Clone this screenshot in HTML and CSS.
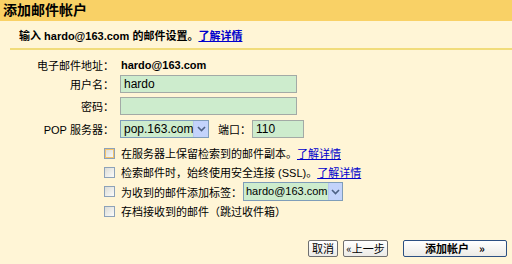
FILE: index.html
```html
<!DOCTYPE html>
<html lang="zh-CN">
<head>
  <meta charset="UTF-8">
  <title>添加邮件帐户</title>
  <link rel="stylesheet" href="styles.css">
</head>
<body>
  <div class="header">添加邮件帐户</div>

  <div class="intro">
    输入 <span class="latin">hardo@163.com</span> 的邮件设置。<a href="#">了解详情</a>
  </div>

  <div class="fields">
    <div class="row row-email">
      <span class="label">电子邮件地址：</span>
      <span class="value latin">hardo@163.com</span>
    </div>
    <div class="row row-input">
      <span class="label">用户名：</span>
      <span class="input wide">hardo</span>
    </div>
    <div class="row row-input">
      <span class="label">密码：</span>
      <span class="input wide"></span>
    </div>
    <div class="row row-pop">
      <span class="label"><span class="latin">POP</span> 服务器：</span>
      <span class="select pop">
        <span class="select-text">pop.163.com</span>
        <span class="arrow"><svg width="9" height="6" viewBox="0 0 9 6"><path d="M1 1 L4.5 4.5 L8 1" fill="none" stroke="#4d6185" stroke-width="1.6"/></svg></span>
      </span>
      <span class="port-label">端口：</span>
      <span class="input port">110</span>
    </div>
  </div>

  <div class="options">
    <div class="opt">
      <span class="check hover"></span>
      <span>在服务器上保留检索到的邮件副本。<a href="#">了解详情</a></span>
    </div>
    <div class="opt">
      <span class="check"></span>
      <span>检索邮件时，始终使用安全连接 <span class="latin">(SSL)</span>。<a href="#">了解详情</a></span>
    </div>
    <div class="opt opt-select">
      <span class="check"></span>
      <span class="opt-text">为收到的邮件添加标签：</span>
      <span class="select label-select">
        <span class="select-text">hardo@163.com</span>
        <span class="arrow"><svg width="9" height="6" viewBox="0 0 9 6"><path d="M1 1 L4.5 4.5 L8 1" fill="none" stroke="#4d6185" stroke-width="1.6"/></svg></span>
      </span>
    </div>
    <div class="opt">
      <span class="check"></span>
      <span>存档接收到的邮件（跳过收件箱）</span>
    </div>
  </div>

  <div class="buttons">
    <button class="btn cancel">取消</button>
    <button class="btn back">«上一步</button>
    <button class="btn primary">添加帐户 &nbsp; &nbsp;»</button>
  </div>
</body>
</html>
```

FILE: styles.css
```css
body {
  margin: 0;
  width: 512px;
  height: 264px;
  background: #fff5d6;
  font-family: "Liberation Sans", "Noto Sans CJK SC", sans-serif;
  font-size: 11px;
  color: #000;
  overflow: hidden;
}
a {
  color: #0000cc;
  text-decoration: underline;
}
.latin {
  font-family: "Liberation Sans", sans-serif;
}
.header {
  height: 21px;
  line-height: 21px;
  padding-left: 3px;
  background: #f9d166;
  font-size: 14px;
  font-weight: bold;
}
.intro {
  margin-left: 10px;
  padding: 6px 0 0 9px;
  height: 21px;
  font-weight: bold;
  border-bottom: 2px solid #f1dc7a;
}
.fields {
  display: flex;
  flex-direction: column;
  margin-top: 7px;
}
.row {
  display: grid;
  grid-template-columns: 120px auto;
  align-items: center;
}
.row-email {
  height: 15px;
}
.row-input {
  height: 18px;
  margin-top: 3px;
}
.row-input + .row-input {
  margin-top: 4px;
}
.row-pop {
  height: 18px;
  margin-top: 5px;
  grid-template-columns: 120px 89px 43px 52px;
}
.label {
  text-align: right;
  padding-right: 6px;
  white-space: nowrap;
}
.value {
  font-weight: bold;
  padding-left: 1px;
}
.input {
  box-sizing: border-box;
  height: 18px;
  line-height: 16px;
  padding-left: 3px;
  background: #cdeccd;
  border: 1px solid #a3aaa6;
  font-family: "Liberation Sans", sans-serif;
  font-size: 12px;
}
.wide {
  width: 177px;
}
.port {
  width: 52px;
}
.port-label {
  padding-left: 9px;
  white-space: nowrap;
}
.select {
  box-sizing: border-box;
  display: flex;
  align-items: stretch;
  height: 18px;
  background: #cdeccd;
  border: 1px solid #7f9db9;
  font-family: "Liberation Sans", sans-serif;
  font-size: 12px;
}
.select-text {
  flex: 1;
  line-height: 16px;
  padding-left: 3px;
  white-space: nowrap;
}
.arrow {
  width: 14px;
  flex: none;
  display: flex;
  align-items: center;
  justify-content: center;
  background: #c3d3fb;
  border-left: 1px solid #b7c8ef;
}
.options {
  display: flex;
  flex-direction: column;
  gap: 1px;
  margin-top: 6px;
  padding-left: 104px;
}
.opt {
  display: flex;
  align-items: center;
  height: 18px;
  white-space: nowrap;
}
.opt-select {
  height: 19px;
}
.opt-text {
  width: 122px;
  flex: none;
}
.check {
  box-sizing: border-box;
  flex: none;
  width: 11px;
  height: 11px;
  margin-right: 6px;
  border: 1px solid #8da2b9;
  background: linear-gradient(135deg, #dcdcd6, #fbfbfa);
}
.check.hover {
  box-shadow: inset 0 0 0 1px #f5c36c;
}
.label-select {
  width: 100px;
  flex: none;
  height: 19px;
  font-size: 11px;
}
.label-select .select-text {
  line-height: 17px;
  padding-left: 2px;
}
.label-select .arrow {
  width: 13px;
}
.buttons {
  display: flex;
  justify-content: flex-end;
  margin-top: 20px;
  padding-right: 5px;
}
.btn {
  box-sizing: border-box;
  height: 17px;
  padding: 0;
  font-family: "Noto Sans CJK SC", sans-serif;
  font-size: 11px;
  line-height: 15px;
  background: linear-gradient(#ffffff, #ecebe6);
  border: 1px solid #6f6f6f;
  border-radius: 2px;
  color: #000;
}
.cancel {
  width: 30px;
}
.back {
  width: 45px;
  margin-left: 5px;
}
.primary {
  width: 104px;
  margin-left: 15px;
  font-weight: bold;
  border-color: #2b4f82;
}
```
